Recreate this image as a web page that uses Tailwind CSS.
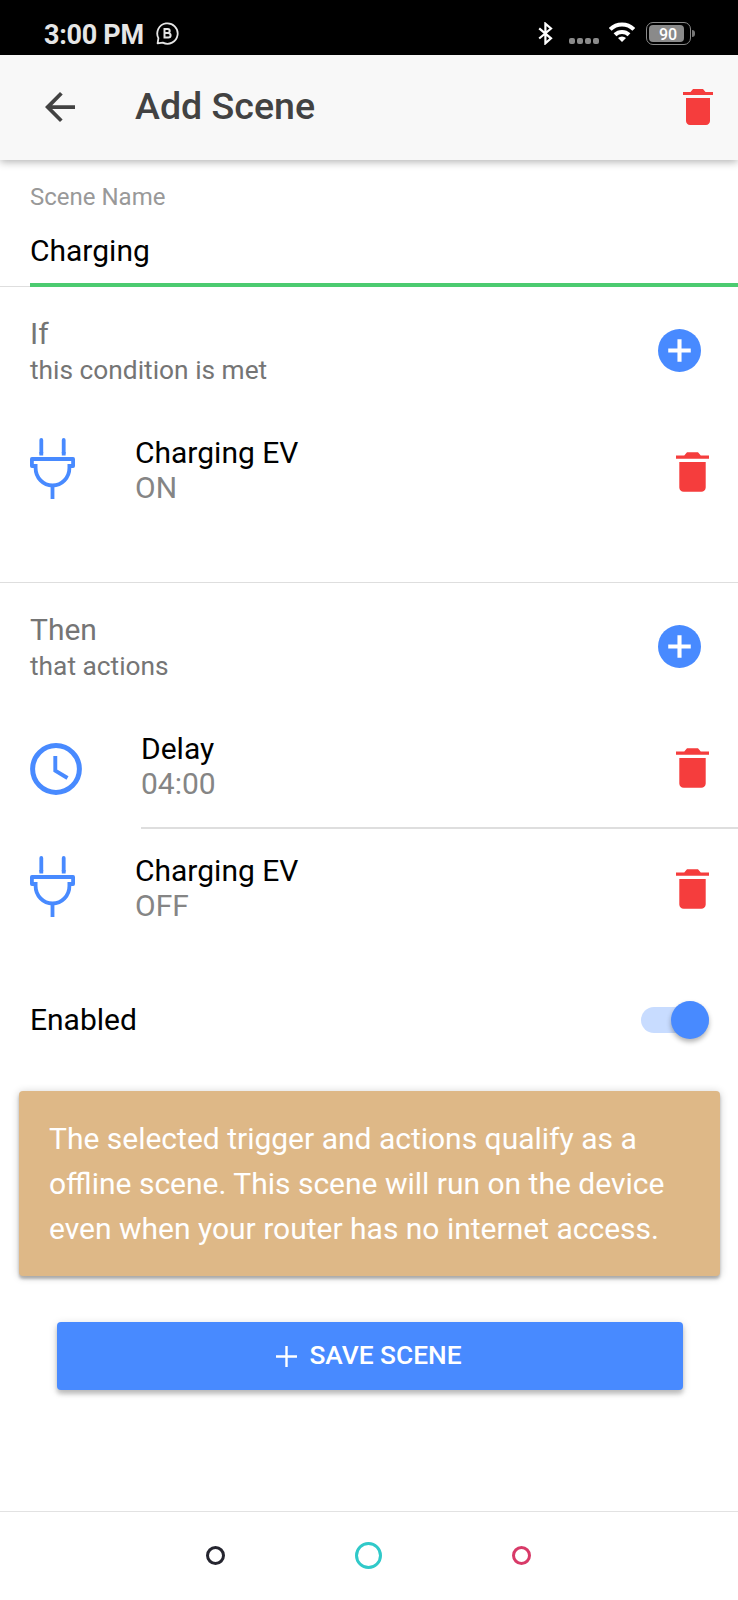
<!DOCTYPE html>
<html lang="en">

<head>
    <meta charset="UTF-8">
    <meta name="viewport" content="width=device-width,initial-scale=1.0">
    <script src="https://cdn.jsdelivr.net/npm/@tailwindcss/browser@4"></script>
    <title>Add Scene</title>
</head>

<body class="bg-white font-['Roboto',sans-serif] text-black">
    <!-- shared icons -->
    <svg class="hidden">
        <symbol id="trash" viewBox="96 64 320 384">
            <path d="M128 405.429C128 428.846 147.198 448 170.667 448h170.667C364.802 448 384 428.846 384 405.429V160H128v245.429zM416 96h-80l-26.785-32H202.786L176 96H96v32h320V96z" />
        </symbol>
        <symbol id="plug" viewBox="0 0 45 61">
            <g fill="none" stroke="currentColor" stroke-width="3.8">
                <path d="M11.3 2v13M33.7 2v13" stroke-linecap="round" />
                <path d="M11.3 14v3.5M33.7 14v3.5" />
                <path d="M5.6 28H1.9v-7h41.2v7h-3.7" stroke-linejoin="round" />
                <path d="M5.6 26v4a16.9 17.5 0 0 0 33.8 0v-4M22.5 47v14" />
            </g>
        </symbol>
        <symbol id="plus-circle" viewBox="0 0 42 42">
            <circle cx="21" cy="21" r="21" fill="#488aff" />
            <path d="M21 10v22M10 21h22" stroke="#fff" stroke-width="4" />
        </symbol>
    </svg>

    <div class="flex flex-col w-[738px] h-[1600px]">
        <!-- Status bar -->
        <div class="flex items-center h-[55px] pt-[12px] pl-[44px] pr-[44px] bg-black text-[#e6e6e6]">
            <span class="text-[27px] font-bold leading-[41px] tracking-[-0.3px] pt-[4px]">3:00 PM</span>
            <svg class="ml-[12px] w-[23px] h-[23px]" viewBox="0 0 23 23" fill="none" stroke="currentColor">
                <path d="M1.6 21.3L2.4 16.2A10.2 10.2 0 1 1 6.8 20.6Z" stroke-width="1.8" stroke-linejoin="round" />
                <path d="M8.5 7v8.6h3.8a2.3 2.3 0 0 0 0-4.6H8.5h3.2a2 2 0 0 0 0-4z" stroke-width="2" />
            </svg>
            <div class="flex items-center ml-auto">
                <svg class="w-[15px] h-[23px]" viewBox="0 0 15 23" fill="none" stroke="#fff" stroke-width="2.2">
                    <path d="M1.2 6.3l11.8 10-5.6 5V1.7l5.6 4.8L1.2 16.5" />
                </svg>
                <div class="flex gap-[2px] ml-[16px] mt-[15px]">
                    <i class="w-[6px] h-[6px] rounded-[2px] bg-[#8a8a8a]"></i>
                    <i class="w-[6px] h-[6px] rounded-[2px] bg-[#8a8a8a]"></i>
                    <i class="w-[6px] h-[6px] rounded-[2px] bg-[#8a8a8a]"></i>
                    <i class="w-[6px] h-[6px] rounded-[2px] bg-[#8a8a8a]"></i>
                </div>
                <svg class="ml-[10px] mt-[-3px] w-[26px] h-[20px]" viewBox="0 0 26 20" fill="none" stroke="#fff" stroke-width="4">
                    <path d="M1.2 7.4a16.7 16.7 0 0 1 23.6 0M6 12.8a10 10 0 0 1 14 0" />
                    <path d="M13 20l-4-4a5.8 5.8 0 0 1 8 0z" fill="#fff" stroke="none" />
                </svg>
                <div class="flex items-center ml-[11px]">
                    <div class="w-[45px] h-[23px] p-[2px] border border-[#8a8a8a] rounded-[7px]">
                        <div class="w-[35px] h-[17px] rounded-[4px] bg-[#8a8a8a] pl-[3px] text-center text-[16px] leading-[19px] font-medium text-white">90</div>
                    </div>
                    <i class="ml-[1px] w-[3px] h-[7px] -mr-px rounded-r-[3px] bg-[#777]"></i>
                </div>
            </div>
        </div>

        <!-- Toolbar -->
        <div class="relative flex items-center h-[105px] pl-[45px] pr-[25px] bg-[#f8f8f8] shadow-[0_2px_8px_rgba(0,0,0,0.3)]">
            <svg class="w-[30px] h-[30px] mb-[1px]" viewBox="85 85 342 342" fill="#424242">
                <path d="M427 234.625H167.296l119.702-119.702L256 85 85 256l171 171 29.922-29.924-118.626-119.701H427v-42.75z" />
            </svg>
            <h1 class="ml-[60px] mb-[4px] text-[37.6px] font-medium leading-[44px] text-[#424242]">Add Scene</h1>
            <svg class="ml-auto mb-[1px] w-[30px] h-[36px] fill-[#f53d3d]"><use href="#trash" /></svg>
        </div>

        <!-- Scene name -->
        <div class="pt-[22px] border-b border-[#dedede]">
            <div class="pl-[30px]">
                <label class="block text-[24px] leading-[30px] text-[#999]">Scene Name</label>
                <div class="mt-[21px] text-[30px] leading-[36px]">Charging</div>
            </div>
            <div class="ml-[30px] mt-[14px] -mb-px h-[4px] bg-[#4ccb70]"></div>
        </div>

        <!-- If -->
        <div class="h-[296px] border-b border-[#dedede]">
            <div class="flex items-start justify-between h-[125px] pt-[29px] pl-[30px] pr-[37px] text-[#757575]">
                <div>
                    <div class="text-[30px] leading-[36px]">If</div>
                    <div class="text-[26.3px] leading-[36px]">this condition is met</div>
                </div>
                <svg class="mt-[13px] w-[43px] h-[43px]"><use href="#plus-circle" /></svg>
            </div>
            <div class="flex items-center h-[119px] pl-[30px] pr-[29px] text-[30px] leading-[35px]">
                <svg class="w-[45px] h-[61px] mb-[6px] text-[#488aff]"><use href="#plug" /></svg>
                <div class="ml-[60px] mb-[3px]">
                    <div>Charging EV</div>
                    <div class="text-[#858585]">ON</div>
                </div>
                <svg class="ml-auto w-[33px] h-[40px] fill-[#f53d3d]"><use href="#trash" /></svg>
            </div>
        </div>

        <!-- Then -->
        <div>
            <div class="flex items-start justify-between h-[125px] pt-[29px] pl-[30px] pr-[37px] text-[#757575]">
                <div>
                    <div class="text-[30px] leading-[36px]">Then</div>
                    <div class="text-[26.3px] leading-[36px]">that actions</div>
                </div>
                <svg class="mt-[13px] w-[43px] h-[43px]"><use href="#plus-circle" /></svg>
            </div>
            <div class="flex items-center h-[121px] pl-[30px] text-[30px] leading-[35px]">
                <svg class="w-[52px] h-[52px]" viewBox="0 0 52 52" fill="none" stroke="#488aff">
                    <circle cx="26" cy="26" r="23.4" stroke-width="5" />
                    <path d="M25.3 13v14.6l12.2 7.4" stroke-width="3.9" />
                </svg>
                <div class="flex items-center flex-1 h-full ml-[59px] pr-[29px] border-b-2 border-[#dedede]">
                    <div class="mb-[3px]">
                        <div>Delay</div>
                        <div class="text-[#858585]">04:00</div>
                    </div>
                    <svg class="ml-auto w-[33px] h-[40px] fill-[#f53d3d]"><use href="#trash" /></svg>
                </div>
            </div>
            <div class="flex items-center h-[119px] pl-[30px] pr-[29px] text-[30px] leading-[35px]">
                <svg class="w-[45px] h-[61px] mb-[5px] text-[#488aff]"><use href="#plug" /></svg>
                <div class="ml-[60px] mb-[2px]">
                    <div>Charging EV</div>
                    <div class="text-[#858585]">OFF</div>
                </div>
                <svg class="ml-auto w-[33px] h-[40px] fill-[#f53d3d]"><use href="#trash" /></svg>
            </div>
        </div>

        <!-- Enabled toggle -->
        <div class="flex items-center justify-between h-[143px] pl-[30px] pr-[29px]">
            <span class="text-[30px] leading-[36px]">Enabled</span>
            <div class="flex items-center justify-end w-[68px] h-[26px] rounded-full bg-[#c8dcff]">
                <div class="w-[38px] h-[38px] rounded-full bg-[#488aff] shadow-[0_3px_5px_rgba(0,0,0,0.3)]"></div>
            </div>
        </div>

        <!-- Offline scene notice -->
        <div class="ml-[19px] mr-[18px] h-[185px] pt-[25px] px-[30px] rounded-[4px] bg-[#deb887] text-[30px] leading-[45px] text-white shadow-[0_3px_3px_rgba(0,0,0,0.25),0_1px_9px_rgba(0,0,0,0.2)]">
            The selected trigger and actions qualify as a offline scene. This scene will run on the device even when your router has no internet access.
        </div>

        <button class="flex items-center justify-center mt-[46px] ml-[57px] mr-[55px] h-[68px] rounded-[4px] bg-[#488aff] text-[26.3px] font-medium text-white shadow-[0_4px_4px_rgba(0,0,0,0.18),0_2px_8px_rgba(0,0,0,0.16)]">
            <svg class="w-[21px] h-[21px] mr-[12px] -ml-px" viewBox="0 0 21 21" stroke="#fff" stroke-width="2.4">
                <path d="M10.5 0v21M0 10.5h21" />
            </svg>
            <span class="mr-px">SAVE SCENE</span>
        </button>

        <!-- Navigation bar -->
        <div class="flex items-center justify-center mt-auto h-[89px] pb-[2px] pr-px border-t border-[#e2e2e2]">
            <i class="w-[19px] h-[19px] rounded-full border-[3px] border-[#25252f]"></i>
            <i class="w-[27px] h-[27px] mx-[130px] rounded-full border-[3px] border-[#30c9c9]"></i>
            <i class="w-[19px] h-[19px] rounded-full border-[3px] border-[#d83a68]"></i>
        </div>
    </div>
</body>

</html>
